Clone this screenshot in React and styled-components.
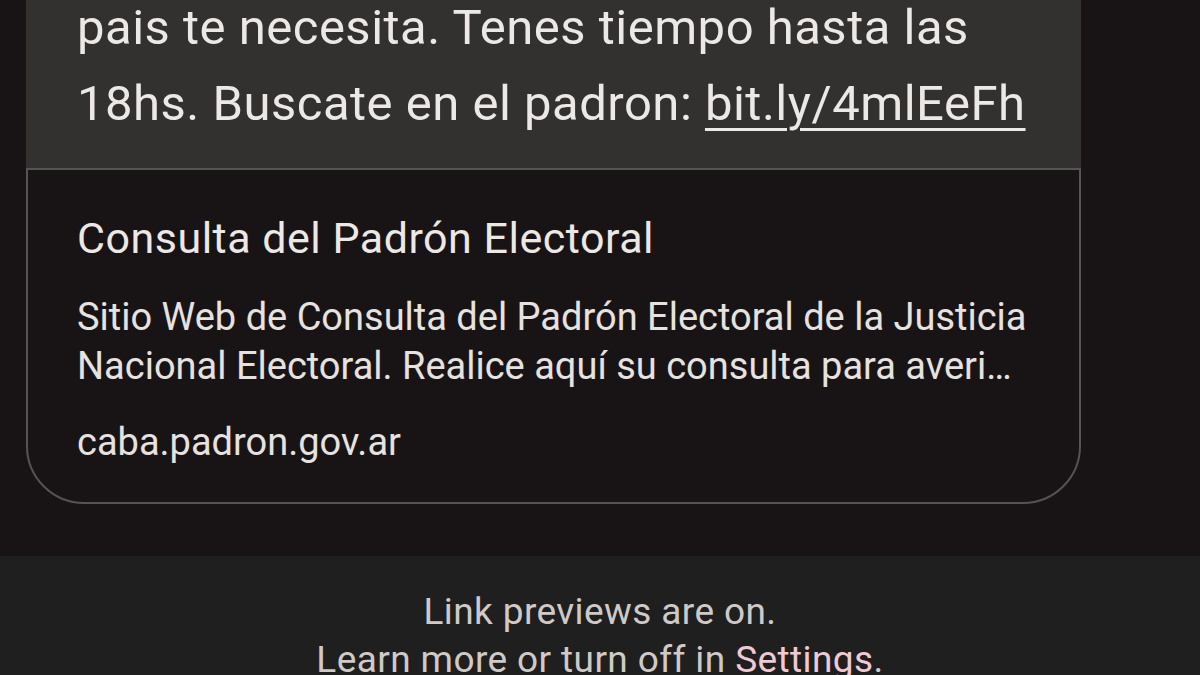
import React from "react";
import styled, { createGlobalStyle } from "styled-components";

const GlobalStyle = createGlobalStyle`
  html, body {
    margin: 0;
    padding: 0;
    background: #181415;
    height: 675px;
    overflow: hidden;
  }
  body {
    font-family: Roboto, "Noto Sans", sans-serif;
    -webkit-font-smoothing: antialiased;
  }
`;

const Screen = styled.div`
  display: flex;
  flex-direction: column;
  width: 1200px;
  height: 675px;
  overflow: hidden;
`;

const Bubble = styled.div`
  margin-left: 26px;
  width: 1055px;
  display: flex;
  flex-direction: column;
`;

const MessageBody = styled.div`
  background: #333130;
  padding: 0 0 26px 51px;
`;

const MessageText = styled.p`
  margin: -10px 0 0;
  font-size: 49px;
  line-height: 76px;
  letter-spacing: 0.5px;
  color: #ece8e6;
  white-space: nowrap;
`;

const Line = styled.span`
  display: block;
`;

const Link = styled.a`
  color: inherit;
  text-decoration: underline;
  text-decoration-thickness: 3px;
  text-underline-offset: 8px;
`;

const Preview = styled.div`
  border: 2px solid #555353;
  border-radius: 0 0 58px 58px;
  background: #181415;
  padding: 43px 40px 35px 49px;
  display: flex;
  flex-direction: column;
`;

const PreviewTitle = styled.div`
  font-size: 43px;
  line-height: 50px;
  letter-spacing: 0.5px;
  color: #ece8e6;
`;

const PreviewDesc = styled.div`
  margin-top: 30px;
  font-size: 38px;
  line-height: 49px;
  color: #e6e2e0;
  white-space: nowrap;
`;

const PreviewUrl = styled.div`
  margin-top: 26px;
  font-size: 38px;
  line-height: 50px;
  color: #e6e2e0;
`;

const Footer = styled.div`
  margin-top: 52px;
  flex: 1;
  background: #1f1f1f;
  padding-top: 32px;
  text-align: center;
  font-size: 37px;
  line-height: 48px;
  letter-spacing: 0.4px;
  color: #cfcac8;
  white-space: nowrap;
`;

const SettingsLink = styled.span`
  color: #efc9d4;
`;

export default function App() {
  return (
    <>
      <GlobalStyle />
      <Screen>
        <Bubble>
          <MessageBody>
            <MessageText>
              <Line>pais te necesita. Tenes tiempo hasta las</Line>
              <Line>
                18hs. Buscate en el padron: <Link href="#">bit.ly/4mlEeFh</Link>
              </Line>
            </MessageText>
          </MessageBody>
          <Preview>
            <PreviewTitle>Consulta del Padrón Electoral</PreviewTitle>
            <PreviewDesc>
              <Line>Sitio Web de Consulta del Padrón Electoral de la Justicia</Line>
              <Line>Nacional Electoral. Realice aquí su consulta para averi…</Line>
            </PreviewDesc>
            <PreviewUrl>caba.padron.gov.ar</PreviewUrl>
          </Preview>
        </Bubble>
        <Footer>
          <Line>Link previews are on.</Line>
          <Line>
            Learn more or turn off in <SettingsLink>Settings</SettingsLink>.
          </Line>
        </Footer>
      </Screen>
    </>
  );
}
